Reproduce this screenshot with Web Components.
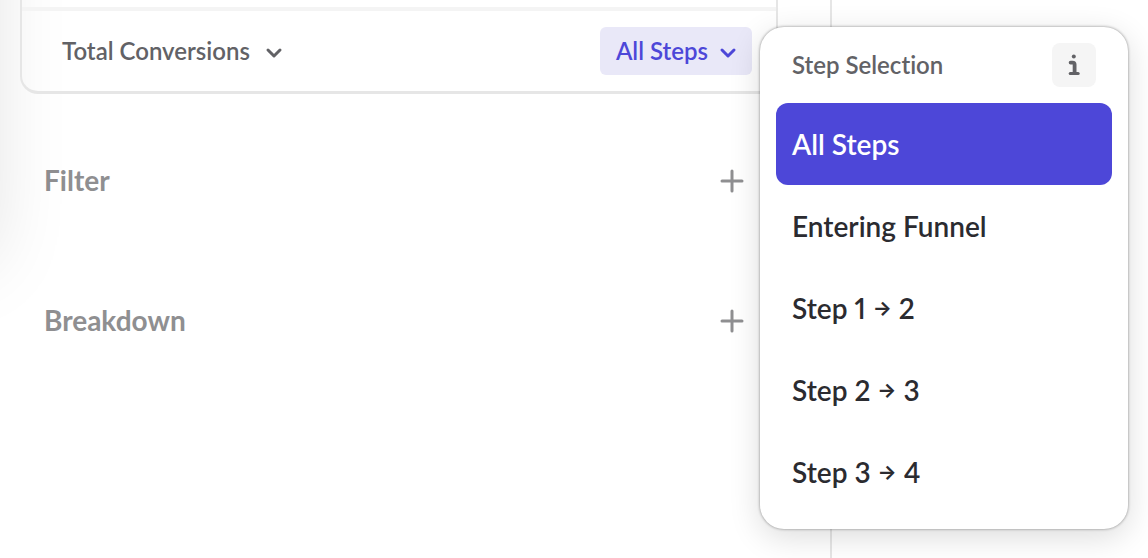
<!DOCTYPE html>
<html lang="en">
<head>
<meta charset="utf-8">
<meta name="viewport" content="width=device-width, initial-scale=1">
<title>Funnel query builder</title>
<style>
  html, body { margin: 0; min-height: 100%; background: #fff; }
  body { font-family: Lato, "Liberation Sans", sans-serif; font-weight: 600; font-variant-ligatures: none; font-variant-numeric: proportional-nums; color: #626266; overflow: hidden; }
</style>
</head>
<body>
<query-builder>
  <query-card>
    <drop-button slot="measure">Total Conversions</drop-button>
    <drop-button slot="steps" active>All Steps</drop-button>
    <step-menu slot="menu" heading="Step Selection">
      <step-option selected>All Steps</step-option>
      <step-option>Entering Funnel</step-option>
      <step-option>Step 1 <span>→</span> 2</step-option>
      <step-option>Step 2 <span>→</span> 3</step-option>
      <step-option>Step 3 <span>→</span> 4</step-option>
    </step-menu>
  </query-card>
  <query-section heading="Filter"></query-section>
  <query-section heading="Breakdown"></query-section>
</query-builder>

<script>
const define = (name, html, setup) => {
  const template = document.createElement('template');
  template.innerHTML = html;
  customElements.define(name, class extends HTMLElement {
    constructor() {
      super();
      this.attachShadow({ mode: 'open' }).append(template.content.cloneNode(true));
    }
    connectedCallback() { if (setup) setup(this, this.shadowRoot); }
  });
};

define('query-builder', `
  <style>
    :host { display: grid; grid-template-columns: minmax(0, 832px) 1fr; min-height: 100vh; }
    aside { position: relative; box-sizing: border-box; border-right: 2px solid #e6e6e6; padding: 0 52px 0 20px; }
    /* shade cast by the navigation rail to the left */
    aside::before { content: ""; position: absolute; left: -100px; top: -200px; width: 90px; height: 460px;
      box-shadow: 0 0 80px 0 rgba(0, 0, 0, .13); pointer-events: none; }
  </style>
  <aside><slot></slot></aside>
  <main></main>`);

define('query-card', `
  <style>
    :host { display: block; position: relative; border: 2px solid #e6e6e6; border-top: 0; border-bottom-width: 3px; border-radius: 0 0 18px 18px; }
    .events { height: 7px; border-bottom: 4px solid #f4f4f4; }
    .row { display: flex; justify-content: space-between; align-items: center; padding: 16px 24px; }
    .anchor { position: relative; }
    slot[name=menu]::slotted(*) { position: absolute; left: calc(100% + 8px); top: 0; z-index: 2; }
  </style>
  <div class="events"></div>
  <div class="row">
    <slot name="measure"></slot>
    <div class="anchor"><slot name="steps"></slot><slot name="menu"></slot></div>
  </div>`);

define('drop-button', `
  <style>
    :host { display: block; }
    button { display: flex; align-items: center; gap: 14px; height: 48px; padding: 0 14px 0 16px; border: 0; border-radius: 6px;
      background: none; color: inherit; font: inherit; font-variant: inherit; font-size: 24px; line-height: 32px; white-space: nowrap; }
    :host([active]) button { gap: 10px; background: #e9e8f8; color: #4d47d8; }
    svg { display: block; margin-top: 4px; }
  </style>
  <button type="button" aria-haspopup="listbox">
    <slot></slot>
    <svg width="20" height="12" viewBox="0 0 20 12" fill="none" stroke="currentColor" stroke-width="3" stroke-linecap="round" stroke-linejoin="round" aria-hidden="true"><path d="M4 3l6 6 6-6"/></svg>
  </button>`,
  (host, root) => {
    if (host.hasAttribute('active')) root.querySelector('button').setAttribute('aria-expanded', 'true');
  });

define('query-section', `
  <style>
    :host { display: flex; justify-content: space-between; align-items: center; height: 44px; margin-top: 96px; padding: 0 24px; color: #8f8f91; }
    :host(:nth-of-type(1)) { margin-top: 65px; }
    h2 { margin: 0; padding-bottom: 2px; font-size: 28px; line-height: 36px; font-weight: 700; }
    button { display: grid; place-items: center; width: 44px; height: 44px; padding: 0; border: 0; background: none; color: inherit; }
  </style>
  <h2></h2>
  <button type="button">
    <svg width="24" height="24" viewBox="0 0 24 24" fill="none" stroke="currentColor" stroke-width="3" stroke-linecap="round" aria-hidden="true"><path d="M12 2v20M2 12h20"/></svg>
  </button>`,
  (host, root) => {
    const heading = host.getAttribute('heading');
    root.querySelector('h2').textContent = heading;
    root.querySelector('button').setAttribute('aria-label', 'Add ' + heading.toLowerCase());
  });

define('step-menu', `
  <style>
    :host { display: block; box-sizing: border-box; width: 368px; padding: 16px; border-radius: 24px; background: #fff;
      box-shadow: 0 0 3px rgba(0, 0, 0, .45), 0 8px 32px rgba(0, 0, 0, .14); }
    header { display: flex; justify-content: space-between; align-items: center; padding: 0 16px 16px; }
    h3 { margin: 0; font-size: 24px; line-height: 32px; font-weight: 600; color: #626266; }
    button { display: grid; place-items: center; width: 44px; height: 44px; padding: 0; border: 0; border-radius: 8px; background: #f5f5f5; color: #626266; }
  </style>
  <header>
    <h3></h3>
    <button type="button" aria-label="About step selection">
      <svg width="14" height="22" viewBox="0 0 14 22" fill="none" stroke="currentColor" stroke-linecap="round" stroke-linejoin="round" aria-hidden="true">
        <circle cx="6.8" cy="2.6" r="2" fill="currentColor" stroke="none"/>
        <path stroke-width="3.8" d="M3.6 8.6H5.6Q7.6 8.6 7.6 10.6V19"/>
        <path stroke-width="3" d="M3.2 19.4H11.2"/>
      </svg>
    </button>
  </header>
  <div role="listbox"><slot></slot></div>`,
  (host, root) => {
    root.querySelector('h3').textContent = host.getAttribute('heading');
    root.querySelector('[role=listbox]').setAttribute('aria-label', host.getAttribute('heading'));
  });

define('step-option', `
  <style>
    :host { display: block; }
    button { display: block; width: 100%; height: 82px; padding: 0 16px; border: 0; border-radius: 12px; background: none;
      color: #2b2b30; font: inherit; font-variant: inherit; font-size: 28px; line-height: 36px; text-align: left; white-space: nowrap; }
    :host([selected]) button { background: #4d47d8; color: #fff; }
    ::slotted(span) { font-family: Inter, sans-serif; font-size: 20px; font-weight: 700; vertical-align: 4px; line-height: 1; }
  </style>
  <button type="button" role="option"><slot></slot></button>`,
  (host, root) => root.querySelector('button').setAttribute('aria-selected', host.hasAttribute('selected')));
</script>
</body>
</html>
